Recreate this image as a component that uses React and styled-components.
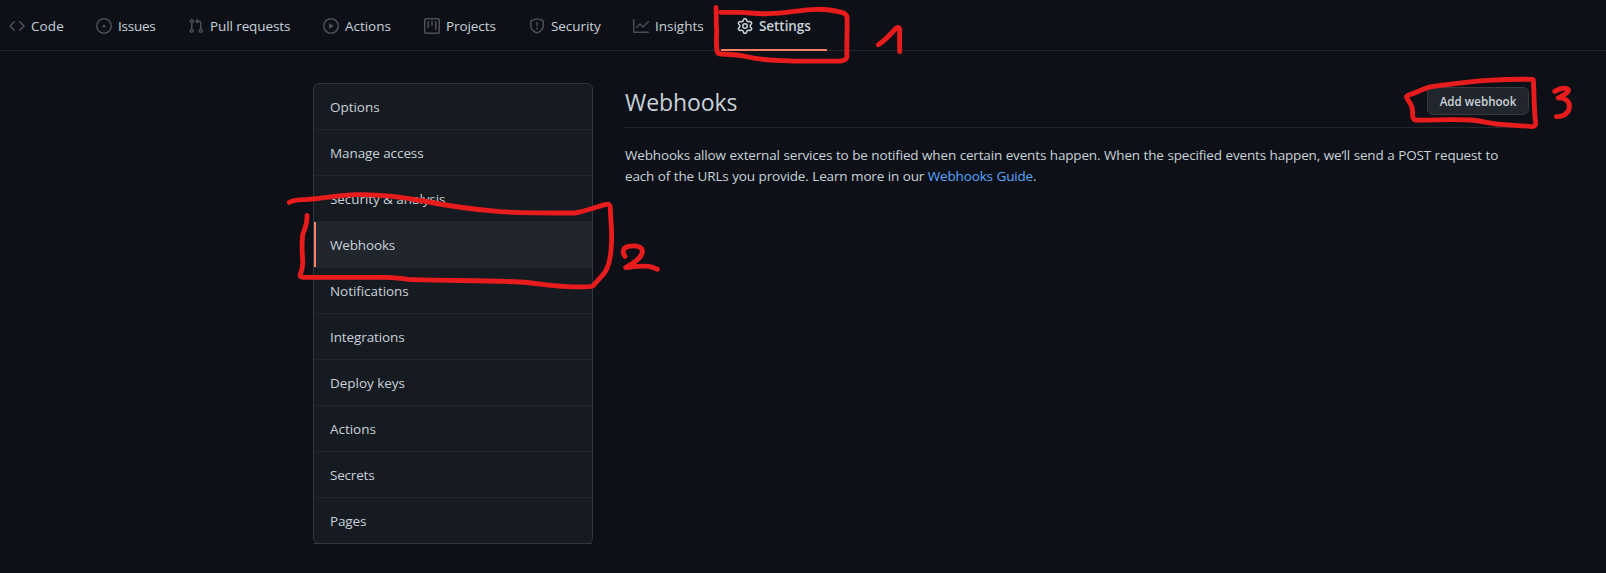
import React from "react";
import styled, { createGlobalStyle, css } from "styled-components";

const GlobalStyle = createGlobalStyle`
  *, *::before, *::after { box-sizing: border-box; }
  body {
    margin: 0;
    background: #0d1117;
    color: #c9d1d9;
    font: 400 13.5px/21px "Open Sans", "Noto Sans", sans-serif;
    font-kerning: normal;
    font-variant-ligatures: none;
    overflow: hidden;
  }
`;

const Page = styled.div`
  position: relative;
  width: 1606px;
  height: 573px;
  overflow: hidden;
`;

const RepoNav = styled.nav`
  display: flex;
  height: 51px;
  margin-left: -7px;
  border-bottom: 1px solid #21262d;
`;

const Tab = styled.a`
  display: flex;
  flex: 0 0 ${(p) => p.$width}px;
  align-items: center;
  height: 51px;
  padding: 2px 0 0 16px;
  border-bottom: 2px solid ${(p) => (p.$active ? "#f78166" : "transparent")};
  color: #c9d1d9;
  font-weight: ${(p) => (p.$active ? 600 : 400)};
  white-space: nowrap;
`;

const TabIcon = styled.svg`
  flex: none;
  width: 16px;
  height: 16px;
  margin-right: 6px;
  fill: ${(p) => (p.$active ? "#c9d1d9" : "#484f58")};
`;

const Label = styled.span`
  padding-top: 2px;
  letter-spacing: ${(p) => p.$track}px;
`;

const Main = styled.div`
  display: flex;
  gap: 32px;
  align-items: flex-start;
  padding: 32px 77px 0 313px;
`;

const Menu = styled.nav`
  position: relative;
  flex: 0 0 280px;
  background: #161b22;
  border: 1px solid #30363d;
  border-radius: 6px;
  &::after {
    content: "";
    position: absolute;
    left: 0;
    right: 0;
    bottom: -1px;
    height: 1px;
    background: #30363d;
  }
`;

const MenuItem = styled.a`
  display: flex;
  align-items: center;
  height: 46px;
  padding: 0 16px;
  color: #c9d1d9;
  border-bottom: 1px solid #21262d;
  ${(p) =>
    p.$selected &&
    css`
      height: 47px;
      margin-top: -1px;
      padding-top: 1px;
      background: linear-gradient(#f78166, #f78166) 0 1px / 2px 45px no-repeat #21262d;
    `}
  &:last-child {
    height: 45px;
    border-bottom: 0;
  }
`;

const Content = styled.main`
  flex: 1;
  min-width: 0;
`;

const Subhead = styled.header`
  display: flex;
  justify-content: space-between;
  align-items: flex-start;
  height: 45px;
  border-bottom: 1px solid #21262d;
`;

const Title = styled.h2`
  margin: 1px 0 0;
  font-size: 23px;
  line-height: 36px;
  font-weight: 400;
  letter-spacing: -0.1px;
`;

const Button = styled.button`
  width: 102px;
  height: 28px;
  margin-top: 4px;
  padding: 1px 0 0;
  color: #c9d1d9;
  background: #21262d;
  border: 1px solid #363b42;
  border-radius: 6px;
  font: 600 11.6px/20px "Open Sans", "Noto Sans", sans-serif;
`;

const Text = styled.p`
  margin: 17px 0 0;
  letter-spacing: -0.165px;
  word-spacing: 0.3px;
  white-space: nowrap;
`;

const Link = styled.a`
  color: #58a6ff;
`;

const Markup = styled.svg`
  position: absolute;
  inset: 0;
  width: 1606px;
  height: 573px;
  pointer-events: none;
  fill: none;
  stroke: #e81c1c;
  stroke-width: 14.5;
  stroke-linecap: round;
  stroke-linejoin: round;
`;

const tabs = [
  { name: "Code", width: 87, track: 0.1, d: "M4.72 3.22a.75.75 0 011.06 1.06L2.06 8l3.72 3.72a.75.75 0 11-1.06 1.06L.47 8.53a.75.75 0 010-1.06l4.25-4.25zm6.56 0a.75.75 0 10-1.06 1.06L13.94 8l-3.72 3.72a.75.75 0 101.06 1.06l4.25-4.25a.75.75 0 000-1.06l-4.25-4.25z" },
  { name: "Issues", width: 92, track: -0.25, d: "M8 9.5a1.5 1.5 0 100-3 1.5 1.5 0 000 3z M8 0a8 8 0 100 16A8 8 0 008 0zM1.5 8a6.5 6.5 0 1113 0 6.5 6.5 0 01-13 0z" },
  { name: "Pull requests", width: 135, track: -0.1, d: "M7.177 3.073L9.573.677A.25.25 0 0110 .854v4.792a.25.25 0 01-.427.177L7.177 3.427a.25.25 0 010-.354zM3.75 2.5a.75.75 0 100 1.5.75.75 0 000-1.5zm-2.25.75a2.25 2.25 0 113 2.122v5.256a2.251 2.251 0 11-1.5 0V5.372A2.25 2.25 0 011.5 3.25zM11 2.5h-1V4h1a1 1 0 011 1v5.628a2.251 2.251 0 101.5 0V5A2.5 2.5 0 0011 2.5zm1 10.25a.75.75 0 111.5 0 .75.75 0 01-1.5 0zM3.75 12a.75.75 0 100 1.5.75.75 0 000-1.5z" },
  { name: "Actions", width: 101, track: -0.03, d: "M1.5 8a6.5 6.5 0 1113 0 6.5 6.5 0 01-13 0zM8 0a8 8 0 100 16A8 8 0 008 0zM6.379 5.227A.25.25 0 006 5.442v5.117a.25.25 0 00.379.214l4.264-2.559a.25.25 0 000-.428L6.379 5.227z" },
  { name: "Projects", width: 105, track: -0.08, d: "M1.75 0A1.75 1.75 0 000 1.75v12.5C0 15.216.784 16 1.75 16h12.5A1.75 1.75 0 0016 14.25V1.75A1.75 1.75 0 0014.25 0H1.75zM1.5 1.75a.25.25 0 01.25-.25h12.5a.25.25 0 01.25.25v12.5a.25.25 0 01-.25.25H1.75a.25.25 0 01-.25-.25V1.75zM11.75 3a.75.75 0 00-.75.75v7.5a.75.75 0 001.5 0v-7.5a.75.75 0 00-.75-.75zm-8.25.75a.75.75 0 011.5 0v5.5a.75.75 0 01-1.5 0v-5.5zM8 3a.75.75 0 00-.75.75v3.5a.75.75 0 001.5 0v-3.5A.75.75 0 008 3z" },
  { name: "Security", width: 104, track: -0.06, d: "M7.467.133a1.75 1.75 0 011.066 0l5.25 1.68A1.75 1.75 0 0115 3.48V7c0 1.566-.32 3.182-1.303 4.682-.983 1.498-2.585 2.813-5.032 3.855a1.7 1.7 0 01-1.33 0c-2.447-1.042-4.049-2.357-5.032-3.855C1.32 10.182 1 8.566 1 7V3.48a1.75 1.75 0 011.217-1.667l5.25-1.68zm.61 1.429a.25.25 0 00-.153 0l-5.25 1.68a.25.25 0 00-.174.238V7c0 1.358.275 2.666 1.057 3.86.784 1.194 2.121 2.34 4.366 3.297a.2.2 0 00.154 0c2.245-.956 3.582-2.104 4.366-3.298C13.225 9.666 13.5 8.36 13.5 7V3.48a.25.25 0 00-.174-.237l-5.25-1.68zM9 10.5a1 1 0 11-2 0 1 1 0 012 0zm-.25-5.75a.75.75 0 10-1.5 0v3a.75.75 0 001.5 0v-3z" },
  { name: "Insights", width: 104, track: -0.01, d: "M1.5 1.75a.75.75 0 00-1.5 0v12.5c0 .414.336.75.75.75h14.5a.75.75 0 000-1.5H1.5V1.75zm14.28 2.53a.75.75 0 00-1.06-1.06L10 7.94 7.53 5.47a.75.75 0 00-1.06 0L3.22 8.72a.75.75 0 001.06 1.06L7 7.06l2.47 2.47a.75.75 0 001.06 0l5.25-5.25z" },
  { name: "Settings", width: 106, track: -0.06, active: true, d: "M7.429 1.525a6.593 6.593 0 011.142 0c.036.003.108.036.137.146l.289 1.105c.147.56.55.967.997 1.189.174.086.341.183.501.29.417.278.97.423 1.53.27l1.102-.303c.11-.03.175.016.195.046.219.31.41.641.573.989.014.031.022.11-.059.19l-.815.806c-.411.406-.562.957-.53 1.456a4.588 4.588 0 010 .582c-.032.499.119 1.05.53 1.456l.815.806c.08.08.073.159.059.19a6.494 6.494 0 01-.573.99c-.02.029-.086.074-.195.045l-1.103-.303c-.559-.153-1.112-.008-1.529.27-.16.107-.327.204-.5.29-.449.222-.851.628-.998 1.189l-.289 1.105c-.029.11-.101.143-.137.146a6.613 6.613 0 01-1.142 0c-.036-.003-.108-.037-.137-.146l-.289-1.105c-.147-.56-.55-.967-.997-1.189a4.502 4.502 0 01-.501-.29c-.417-.278-.97-.423-1.53-.27l-1.102.303c-.11.03-.175-.016-.195-.046a6.492 6.492 0 01-.573-.989c-.014-.031-.022-.11.059-.19l.815-.806c.411-.406.562-.957.53-1.456a4.587 4.587 0 010-.582c.032-.499-.119-1.05-.53-1.456l-.815-.806c-.08-.08-.073-.159-.059-.19a6.44 6.44 0 01.573-.99c.02-.029.086-.075.195-.045l1.103.303c.559.153 1.112.008 1.529-.27.16-.107.327-.204.5-.29.449-.222.851-.628.998-1.189l.289-1.105c.029-.11.101-.143.137-.146zM8 0c-.236 0-.47.01-.701.03-.743.065-1.29.615-1.458 1.261l-.29 1.106c-.017.066-.078.158-.211.224a5.994 5.994 0 00-.668.386c-.123.082-.233.09-.3.071L3.27 2.776c-.644-.177-1.392.02-1.82.63a7.977 7.977 0 00-.704 1.217c-.315.675-.111 1.422.363 1.891l.815.806c.05.048.098.147.088.294a6.084 6.084 0 000 .772c.01.147-.038.246-.088.294l-.815.806c-.474.469-.678 1.216-.363 1.891.2.428.436.835.704 1.218.428.609 1.176.806 1.82.63l1.103-.303c.066-.019.176-.011.299.071.213.143.436.272.668.386.133.066.194.158.212.224l.289 1.106c.169.646.715 1.196 1.458 1.26a8.094 8.094 0 001.402 0c.743-.064 1.29-.614 1.458-1.26l.29-1.106c.017-.066.078-.158.211-.224a5.98 5.98 0 00.668-.386c.123-.082.233-.09.3-.071l1.102.302c.644.177 1.392-.02 1.82-.63.268-.382.505-.789.704-1.217.315-.675.111-1.422-.364-1.891l-.814-.806c-.05-.048-.098-.147-.088-.294a6.1 6.1 0 000-.772c-.01-.147.039-.246.088-.294l.814-.806c.475-.469.679-1.216.364-1.891a7.992 7.992 0 00-.704-1.218c-.428-.609-1.176-.806-1.82-.63l-1.103.303c-.066.019-.176.011-.299-.071a5.991 5.991 0 00-.668-.386c-.133-.066-.194-.158-.212-.224L10.16 1.29C9.99.645 9.444.095 8.701.031A8.094 8.094 0 008 0zm1.5 8a1.5 1.5 0 11-3 0 1.5 1.5 0 013 0zM11 8a3 3 0 11-6 0 3 3 0 016 0z" },
];

const menu = [
  ["Options", -0.04],
  ["Manage access", -0.09],
  ["Security & analysis", -0.07],
  ["Webhooks", -0.15],
  ["Notifications", -0.06],
  ["Integrations", -0.11],
  ["Deploy keys", -0.03],
  ["Actions", -0.03],
  ["Secrets", -0.2],
  ["Pages", -0.15],
];

export default function App() {
  return (
    <Page>
      <GlobalStyle />
      <RepoNav>
        {tabs.map((t) => (
          <Tab key={t.name} $width={t.width} $active={t.active}>
            <TabIcon viewBox="0 0 16 16" fillRule="evenodd" $active={t.active}>
              <path d={t.d} />
            </TabIcon>
            <Label $track={t.track}>{t.name}</Label>
          </Tab>
        ))}
      </RepoNav>
      <Main>
        <Menu>
          {menu.map(([name, track]) => (
            <MenuItem key={name} $selected={name === "Webhooks"}>
              <Label $track={track}>{name}</Label>
            </MenuItem>
          ))}
        </Menu>
        <Content>
          <Subhead>
            <Title>Webhooks</Title>
            <Button>Add webhook</Button>
          </Subhead>
          <Text>
            Webhooks allow external services to be notified when certain events happen. When the specified events happen, we’ll send a POST request to
            <br />
            each of the URLs you provide. Learn more in our <Link>Webhooks Guide</Link>.
          </Text>
        </Content>
      </Main>
      <Markup viewBox="0 0 1606 573">
        <g transform="translate(690 0) scale(.33333)">
          <path d="M78 22C80 45 77 65 80 90C79 115 78 135 81 152Q83 162 95 162C125 163 150 165 175 171C210 180 240 180 280 182C340 185 400 183 452 183Q471 181 471 168C469 125 473 90 471 50Q468 40 455 37C430 31 405 27 378 28C335 29 285 40 235 41C200 43 175 37 150 37L93 37" />
          <path d="M565 134C590 118 603 100 619 84Q628 79 629 90L629 155" />
        </g>
        <g transform="translate(280 180) scale(.33333)">
          <path d="M28 67C40 59 60 60 85 58C135 55 175 45 230 44C290 42 370 52 430 63C510 79 590 89 660 95C730 99 800 99 885 99C920 93 945 82 975 74Q990 68 991 82C991 115 996 140 995 180C994 225 990 250 977 273C968 288 953 300 939 318C910 324 870 320 835 318C795 315 765 309 720 306C610 301 490 302 385 298C360 296 345 292 315 292L70 292Q58 292 61 283C67 270 69 258 68 240C66 215 65 190 68 165C74 145 83 130 81 106" />
        </g>
        <g transform="translate(600 230) scale(.33333)">
          <path d="M75 79C66 66 69 54 83 50C100 45 125 47 127 62C129 82 103 98 77 113C100 109 125 107 145 109C155 110 163 114 172 118" />
        </g>
        <g transform="translate(1380 70) scale(.33333)">
          <path d="M458 28C410 27 370 28 325 31C265 34 210 43 160 49C130 53 115 67 86 75Q76 77 82 87C90 98 98 107 98 125Q96 150 108 150C160 151 210 147 270 150C310 152 330 162 365 163C400 166 430 167 455 170Q468 170 467 158C461 115 463 70 460 30" />
        </g>
        <g transform="translate(1540 75) scale(.33333)">
          <path d="M44 49C56 42 72 37 83 42C92 48 74 60 55 69C74 67 91 79 88 98C85 119 65 126 49 125" />
        </g>
      </Markup>
    </Page>
  );
}
